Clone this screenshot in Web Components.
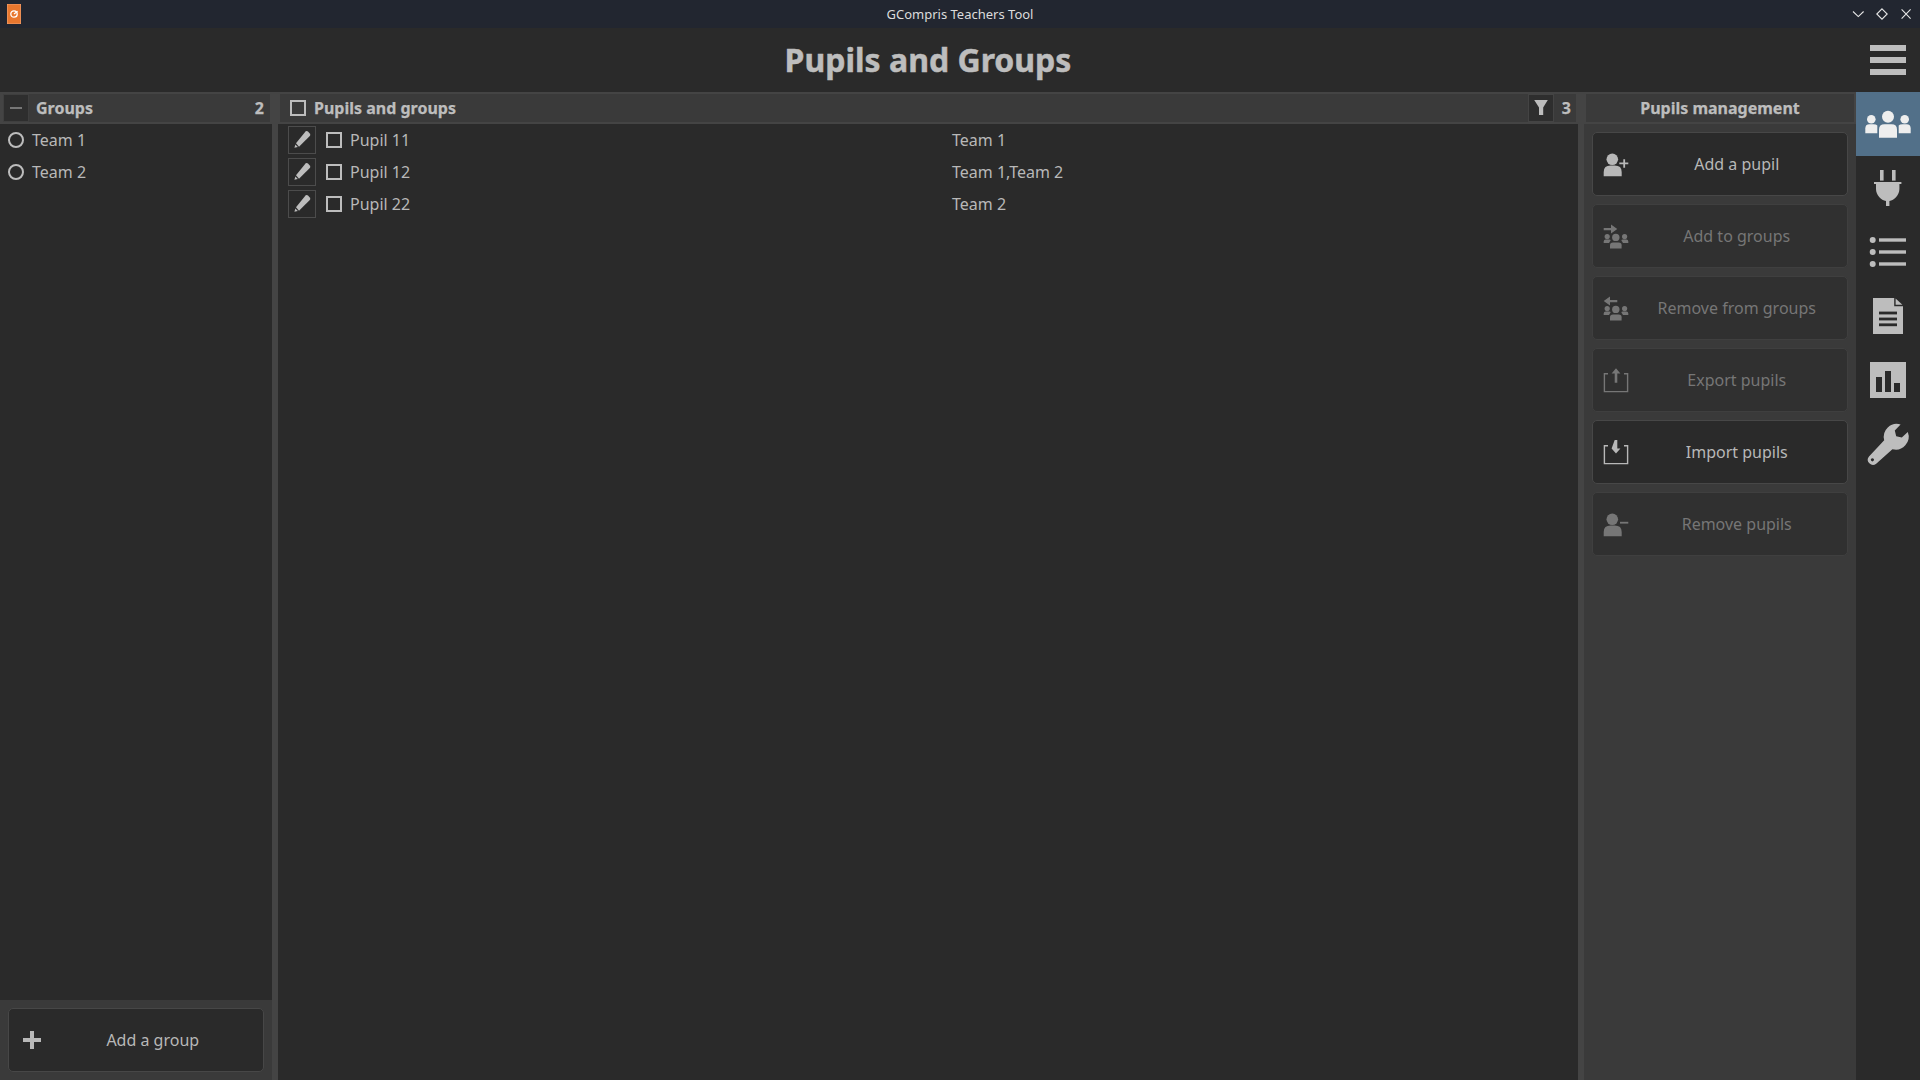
<!DOCTYPE html>
<html lang="en"><head><meta charset="utf-8"><title>GCompris Teachers Tool</title>
<style>
html,body{margin:0;padding:0;width:1920px;height:1080px;overflow:hidden;background:#2a2a2a;font-family:"Noto Sans",sans-serif;color:#bdbdbd}
</style></head>
<body>
<gc-app>
  <gc-titlebar>GCompris Teachers Tool</gc-titlebar>
  <gc-header>Pupils and Groups</gc-header>
  <gc-workspace>
    <gc-panel style="--w:272px">
      <gc-panel-head style="--pl:3px;--pr:2px" mode="collapse" count="2">Groups</gc-panel-head>
      <gc-group-row>Team 1</gc-group-row>
      <gc-group-row>Team 2</gc-group-row>
      <gc-footer slot="foot"><gc-action icon="plus">Add a group</gc-action></gc-footer>
    </gc-panel>
    <gc-panel style="--w:1300px">
      <gc-panel-head style="--pl:2px;--pr:2px" mode="check" count="3" filter>Pupils and groups</gc-panel-head>
      <gc-pupil-row groups="Team 1">Pupil 11</gc-pupil-row>
      <gc-pupil-row groups="Team 1,Team 2">Pupil 12</gc-pupil-row>
      <gc-pupil-row groups="Team 2">Pupil 22</gc-pupil-row>
    </gc-panel>
    <gc-panel style="--w:272px;--bg:#3a3a3a;--mr:0">
      <gc-panel-head style="--pl:2px;--pr:2px" mode="center">Pupils management</gc-panel-head>
      <gc-action-list>
        <gc-action icon="add-pupil">Add a pupil</gc-action>
        <gc-action icon="add-groups" disabled>Add to groups</gc-action>
        <gc-action icon="remove-groups" disabled>Remove from groups</gc-action>
        <gc-action icon="export" disabled>Export pupils</gc-action>
        <gc-action icon="import">Import pupils</gc-action>
        <gc-action icon="remove-pupil" disabled>Remove pupils</gc-action>
      </gc-action-list>
    </gc-panel>
  </gc-workspace>
  <gc-sidebar>
    <gc-side-item icon="people" active></gc-side-item>
    <gc-side-item icon="plug"></gc-side-item>
    <gc-side-item icon="list"></gc-side-item>
    <gc-side-item icon="doc"></gc-side-item>
    <gc-side-item icon="chart"></gc-side-item>
    <gc-side-item icon="wrench"></gc-side-item>
  </gc-sidebar>
</gc-app>
<script>
const person=(x,f)=>`<circle cx="${x}" cy="9.3" r="5.8" fill="${f}"/><path fill="${f}" d="M1.7 26.3V22Q1.7 15.6 8.6 15.6H12.8Q19.7 15.6 19.7 22V26.3Z"/>`;
const crowd=`<g fill="currentColor"><circle cx="13.8" cy="15.4" r="3.7"/><path d="M8 26.4V23.4Q8 20.6 11 20.6H16.6Q19.6 20.6 19.6 23.4V26.4Z"/><circle cx="5.2" cy="14.6" r="2.6"/><path d="M1.7 21V19.6Q1.7 17.6 3.7 17.6H7.4Q8.6 17.6 8.6 18.6L7 21Z"/><circle cx="22.6" cy="14.6" r="2.6"/><path d="M26.3 21V19.6Q26.3 17.6 24.3 17.6H20.6Q19.4 17.6 19.4 18.6L21 21Z"/></g>`;
const tray=`<path fill="none" stroke="currentColor" stroke-width="1.4" d="M6 7.7H2.4V25.6H25.6V7.7H22"/>`;
const ICONS={
 plus:[28,`<path fill="currentColor" d="M12 5h4v7h7v4h-7v7h-4v-7H5v-4h7z"/>`],
 "add-pupil":[28,person(10.3,'currentColor')+`<path fill="currentColor" d="M21.3 9.3h1.8v3.1h3.2v1.8h-3.2v3.5h-1.8v-3.5h-4v-1.8h4z"/>`],
 "remove-pupil":[28,person(10.3,'currentColor')+`<rect x="18" y="11.8" width="8.3" height="1.8" fill="currentColor"/>`],
 "add-groups":[28,crowd+`<path fill="currentColor" d="M1.7 5.9H9V2.5L15.3 7L9 11.5V8.2H1.7z"/>`],
 "remove-groups":[28,crowd+`<path fill="currentColor" d="M15.3 5.9H8V2.5L1.7 7L8 11.5V8.2H15.3z"/>`],
 export:[28,tray+`<path fill="currentColor" d="M14 2.3l4.4 5.2h-3.1v9.2h-2.6V7.5H9.6z"/>`],
 import:[28,tray+`<path fill="currentColor" d="M12.7 2h2.6v8.6h3.1L14 15.6l-4.4-5z"/>`],
 pencil:[28,`<path fill="currentColor" d="M17.7 5.3Q19 4.6 20 5.6L22 7.7Q22.7 8.9 21.8 9.9L11 20.7 8 17.3Z"/><path fill="currentColor" d="M7.4 18.6L9.8 21 6.4 21.8Z"/>`],
 funnel:[26,`<path fill="currentColor" d="M6.2 6H19.8L15.2 13.6V21H11V13.6Z"/>`],
 people:[64,`<g fill="#eeeeee"><circle cx="15.3" cy="27.3" r="4.3"/><path d="M9.3 41.3V36.5Q9.3 32.2 13.4 32.2H17.4Q20.2 32.2 21.3 33.5Q21.3 35 21.3 41.3Z"/><circle cx="32" cy="24.7" r="6"/><path d="M23 45.7V37.5Q23 32.2 28.5 32.2H35.5Q41 32.2 41 37.5V45.7Z"/><circle cx="48.7" cy="27.3" r="4.3"/><path d="M54.7 41.3V36.5Q54.7 32.2 50.6 32.2H46.6Q43.8 32.2 42.7 33.5Q42.7 35 42.7 41.3Z"/></g>`],
 plug:[64,`<g fill="#bdbdbd"><rect x="24" y="14" width="3.6" height="10.6"/><rect x="36" y="14" width="3.6" height="10.6"/><path d="M18 26H45.4V28H43.4V33C43.4 39 38.2 44.4 33.4 45V50H30V45C25.2 44.4 20 39 20 33V28H18Z"/></g>`],
 list:[64,`<g fill="#bdbdbd"><circle cx="16.7" cy="20" r="3"/><rect x="23" y="18.3" width="27" height="3.4"/><circle cx="16.7" cy="32" r="3"/><rect x="23" y="30.3" width="27" height="3.4"/><circle cx="16.7" cy="44" r="3"/><rect x="23" y="42.3" width="27" height="3.4"/></g>`],
 doc:[64,`<path fill="#bdbdbd" d="M17 14H38.2V22.2H47V50H17Z"/><path fill="#bdbdbd" d="M39.6 14.6L46.4 20.8H39.6Z"/><g fill="#2a2a2a"><rect x="23" y="27.6" width="18" height="2.8"/><rect x="23" y="33.6" width="18" height="2.8"/><rect x="23" y="39.4" width="18" height="2.8"/></g>`],
 chart:[64,`<path fill="#bdbdbd" d="M14 14H50V50H14Z"/><g fill="#2a2a2a"><rect x="20" y="29" width="6" height="15"/><rect x="29" y="23" width="6" height="21"/><rect x="38" y="35" width="6" height="9"/></g>`],
 wrench:[64,`<path fill="#bdbdbd" fill-rule="evenodd" d="M44.6 12.5A13 13 0 0 0 28.2 28.2L13 44.4A5.2 5.2 0 0 0 20.2 51.8L36.4 37.2A13 13 0 0 0 51.8 20L45.8 25.6L40.2 24.2L38.8 18.6ZM16.4 46.2a1.6 1.6 0 1 0 .01 0Z"/>`]
};
const def=(name,css,html,extra={})=>{
  class C extends HTMLElement{
    constructor(){super();this.attachShadow({mode:'open'}).innerHTML=`<style>${css}</style>${html}`;}
    connectedCallback(){extra.init&&extra.init.call(this,this.shadowRoot);}
  }
  customElements.define(name,C);
};
class GcIcon extends HTMLElement{
  static get observedAttributes(){return ['name'];}
  constructor(){super();this.attachShadow({mode:'open'});}
  attributeChangedCallback(){this.render();}
  connectedCallback(){this.render();}
  render(){
    const e=ICONS[this.getAttribute('name')];
    if(!e)return;
    const [s,m]=e;
    this.shadowRoot.innerHTML=`<style>:host{display:block;flex:none;line-height:0}svg{display:block}</style><svg xmlns="http://www.w3.org/2000/svg" width="${s}" height="${s}" viewBox="0 0 ${s} ${s}">${m}</svg>`;
  }
}
customElements.define('gc-icon',GcIcon);
def('gc-app',`:host{display:grid;width:1920px;height:1080px;grid-template-columns:1856px 64px;grid-template-rows:28px 64px 988px;grid-template-areas:"t t" "h h" "w s";background:#2a2a2a}
  ::slotted(gc-titlebar){grid-area:t}::slotted(gc-header){grid-area:h}::slotted(gc-workspace){grid-area:w}::slotted(gc-sidebar){grid-area:s}`,`<slot></slot>`);
def('gc-titlebar',`:host{display:grid;grid-template-columns:1fr auto 1fr;align-items:center;background:#222630;color:#dcdcdc;font:13px/28px "Noto Sans",sans-serif;height:28px}
  .logo{margin-left:7px;width:14px;height:19.5px;background:#e8772e;box-shadow:inset 0 0 0 .6px #f0a070;display:flex;align-items:center;justify-content:center}
  .ctl{justify-self:end;display:block}`,
  `<span class="logo"><svg width="10" height="10" viewBox="0 0 10 10"><circle cx="5" cy="5" r="3.2" fill="none" stroke="#fff" stroke-width="1.3"/><path d="M5 5L8.6 2.2" stroke="#fff" stroke-width="1.2"/></svg></span>
   <span class="title"><slot></slot></span>
   <svg class="ctl" width="68" height="28" viewBox="0 0 68 28"><g fill="none" stroke="#e6e6e6" stroke-width="1.1"><path d="M1 11.5L6.3 16.6L11.6 11.5"/><path d="M30 8.8L35.2 14L30 19.2L24.8 14Z"/><path d="M49.6 9.4L58.6 18.6M58.6 9.4L49.6 18.6"/></g></svg>`);
def('gc-header',`:host{display:flex;align-items:center;height:64px;background:#2a2a2a}
  .t{flex:1;text-align:center;font:700 32px/64px "Noto Sans",sans-serif;color:#bdbdbd;-webkit-text-stroke:.5px #bdbdbd}
  .m{flex:none;width:64px;display:flex;flex-direction:column;align-items:center;gap:6px}
  .m i{display:block;width:36px;height:6px;background:#bdbdbd}`,
  `<div class="t"><slot></slot></div><div class="m"><i></i><i></i><i></i></div>`);
def('gc-workspace',`:host{display:flex;background:#444;height:988px}`,`<slot></slot>`);
def('gc-panel',`:host{display:flex;flex-direction:column;flex:none;width:var(--w);background:var(--bg,#2a2a2a);height:988px;margin-right:var(--mr,6px)}
  .b{flex:1}`,`<slot></slot><div class="b"></div><slot name="foot"></slot>`);
def('gc-footer',`:host{display:block;background:#3a3a3a;padding:8px 8.5px 8px 8px;height:80px;box-sizing:border-box}`,`<slot></slot>`);
def('gc-panel-head',`:host{display:block;flex:none;height:32px;box-sizing:border-box;padding:2px var(--pr) 2px var(--pl);background:#444}
  .in{display:flex;align-items:center;height:28px;background:#3a3a3a;font:700 16px/28px "Noto Sans",sans-serif;color:#bdbdbd;-webkit-text-stroke:.25px #bdbdbd}
  .t{flex:1}
  .collapse{flex:none;width:26px;height:28px;box-sizing:border-box;background:#2e2e2e;border:1px solid #3f3f3f;display:none;align-items:center;justify-content:center;margin-right:7px}
  .collapse i{display:block;width:12px;height:2px;background:#777}
  .box{flex:none;width:16px;height:16px;box-sizing:border-box;border:2px solid #bdbdbd;margin:0 8px 0 10px;display:none}
  .filter{flex:none;width:26px;height:28px;box-sizing:border-box;background:#2e2e2e;border:1px solid #444;display:none;color:#bdbdbd}
  .filter gc-icon{margin:-1px}
  .c{flex:none;padding:0 6px 0 0;text-align:right}
  .f .c{box-sizing:border-box;width:22px;padding:0 5px 0 0}`,
  `<div class="in"><div class="collapse"><i></i></div><div class="box"></div><div class="t"><slot></slot></div><div class="filter"><gc-icon name="funnel"></gc-icon></div><div class="c"></div></div>`,
  {init(r){
    const m=this.getAttribute('mode');const c=this.getAttribute('count');
    if(m==='collapse')r.querySelector('.collapse').style.display='flex';
    if(m==='check')r.querySelector('.box').style.display='block';
    if(m==='center'){r.querySelector('.t').style.textAlign='center';r.querySelector('.c').style.display='none';}
    if(this.hasAttribute('filter')){r.querySelector('.filter').style.display='block';r.querySelector('.in').classList.add('f');}
    if(c)r.querySelector('.c').textContent=c;
  }});
def('gc-group-row',`:host{display:flex;align-items:center;height:32px;padding-left:8px;font:16px/32px "Noto Sans",sans-serif;color:#b8b8b8}
  i{display:block;flex:none;width:16px;height:16px;box-sizing:border-box;border:2px solid #bdbdbd;border-radius:50%;margin-right:8px}`,`<i></i><slot></slot>`);
def('gc-pupil-row',`:host{display:flex;align-items:center;height:32px;padding-left:10px;font:16px/32px "Noto Sans",sans-serif;color:#b8b8b8}
  .e{flex:none;box-sizing:border-box;width:28px;height:28px;border:1px solid #4c4c4c;margin-right:10px;line-height:0;color:#bdbdbd}
  .e gc-icon{margin:-1px}
  .b{flex:none;width:16px;height:16px;box-sizing:border-box;border:2px solid #bdbdbd;margin-right:8px}
  .n{flex:none;width:602px}`,
  `<div class="e"><gc-icon name="pencil"></gc-icon></div><div class="b"></div><div class="n"><slot></slot></div><div class="g"></div>`,
  {init(r){r.querySelector('.g').textContent=this.getAttribute('groups');}});
def('gc-action-list',`:host{display:flex;flex-direction:column;gap:8px;padding:8px 8.5px 0 8px}`,`<slot></slot>`);
def('gc-action',`:host{display:flex;align-items:center;height:64px;box-sizing:border-box;padding:0 3px 0 9px;background:#2a2a2a;border:1px solid #474747;border-radius:5px;font:16px/24px "Noto Sans",sans-serif;color:#b8b8b8}
  :host([disabled]){background:#303030;border-color:#3f3f3f;color:#767676}
  .l{flex:1;text-align:center}`,
  `<gc-icon></gc-icon><div class="l"><slot></slot></div>`,
  {init(r){r.querySelector('gc-icon').setAttribute('name',this.getAttribute('icon'));}});
def('gc-sidebar',`:host{display:flex;flex-direction:column;background:#2a2a2a;height:988px}`,`<slot></slot>`);
def('gc-side-item',`:host{display:block;width:64px;height:64px;flex:none}
  :host([active]){background:#527089}`,`<gc-icon></gc-icon>`,
  {init(r){r.querySelector('gc-icon').setAttribute('name',this.getAttribute('icon'));}});
</script>
</body></html>
